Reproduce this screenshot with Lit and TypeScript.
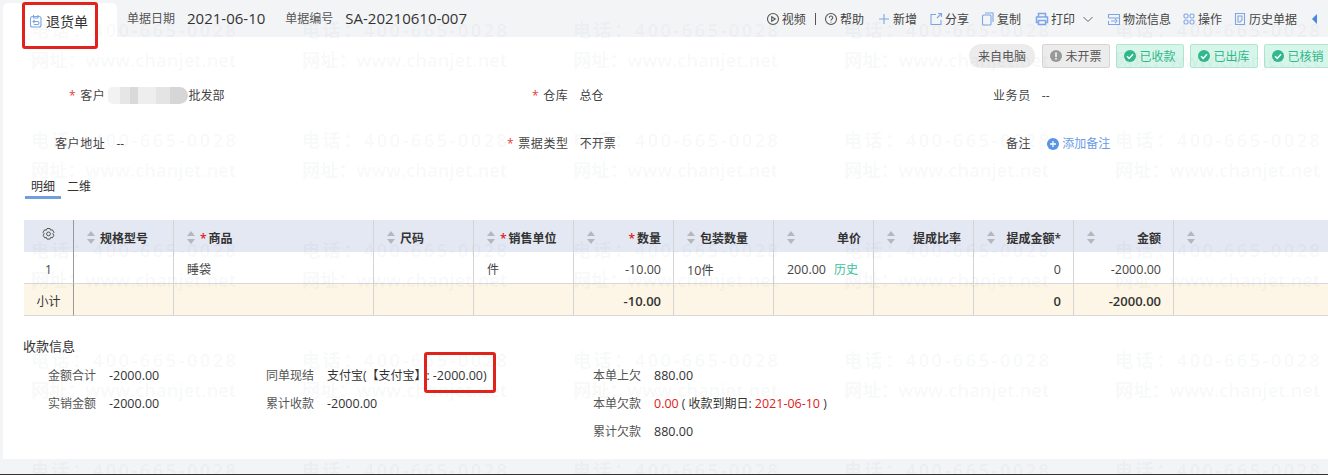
import { LitElement, html, css, svg } from "lit";
import { customElement } from "lit/decorators.js";

const sortIcon = html`<svg class="sort" width="8" height="14" viewBox="0 0 8 14"><path d="M4 0L8 5H0Z M0 8H8L4 13Z" fill="#b5b7bb"/></svg>`;
const ic = (p: unknown, color = "#7ea6e6") => html`<svg class="ic" width="14" height="14" viewBox="0 0 14 14" fill="none" stroke="${color}" stroke-width="1.1">${p}</svg>`;

const cols: { t: string; req?: boolean; right?: boolean }[] = [
  { t: "规格型号" }, { t: "商品", req: true }, { t: "尺码" }, { t: "销售单位", req: true },
  { t: "数量", req: true, right: true }, { t: "包装数量" }, { t: "单价", right: true },
  { t: "提成比率", right: true }, { t: "提成金额*", right: true }, { t: "金额", right: true }, { t: "" },
];

@customElement("app-root")
export class AppRoot extends LitElement {
  static styles = css`
    :host { display: block; width: 1328px; height: 475px; overflow: hidden; position: relative;
      font-family: "Open Sans", "Noto Sans CJK SC", sans-serif; font-size: 12px; color: #333; background: #f3f4f6; text-spacing-trim: space-all; }
    .page { height: 475px; display: flex; flex-direction: column; box-sizing: border-box; border-bottom: 1px solid #333; }
    .top { height: 37px; display: flex; flex: none; padding-left: 3px; }
    .tab { width: 114px; margin-top: 3px; background: #fff; border-radius: 5px 5px 0 0; display: flex; align-items: center;
      gap: 3px; padding: 2px 0 0 26px; box-sizing: border-box; font-size: 14px; color: #333; flex: none; }
    .doc { display: flex; align-items: center; padding: 0 0 0 10px; height: 37px; box-sizing: border-box; padding-bottom: 1px; color: #555; }
    .doc b { font-weight: 400; font-size: 15px; color: #333; margin: 0 20px 0 12px; }
    .tools { margin-left: auto; display: flex; align-items: center; height: 37px; padding: 0 9px 0 0; box-sizing: border-box; white-space: nowrap; color: #444; }
    .tool { display: flex; align-items: center; gap: 2px; margin-left: 12px; }
    .tool.tight { margin-left: 0; }
    .tool.m11 { margin-left: 11px; }
    .tool.m13 { margin-left: 13px; }
    .tool.m14 { margin-left: 14px; }
    .sep { width: 1px; height: 12px; background: #555; margin: 0 8px 0 9px; }
    .chev { margin-left: 4px; }
    .ic { flex: none; display: block; }
    .panel { flex: 1; margin-left: 3px; background: #fff; margin-bottom: 15px; min-height: 0; }
    .badges { display: flex; justify-content: flex-end; align-items: center; gap: 6px; height: 24px; margin-top: 7px; margin-right: -4px; }
    .badge { height: 24px; box-sizing: border-box; border: 1px solid #d5d5d5; background: #ececec; border-radius: 2px;
      display: flex; align-items: center; justify-content: center; gap: 3px; color: #555; width: 68px; }
    .badge.from { border: none; border-radius: 12px; width: 66px; margin-right: 1px; }
    .badge.ok { background: #d8f5ea; border-color: #aee8d3; color: #2fb98c; }
    .form { display: grid; grid-template-columns: 463px 461px 1fr; margin-top: 19px; height: 81px; grid-auto-rows: 48px; }
    .field { display: flex; align-items: flex-start; line-height: 17px; white-space: nowrap; }
    .field .lab { flex: none; color: #444; letter-spacing: .6px; }
    .field .val { margin-left: 11px; color: #444; }
    .field .val.near { margin-left: 3px; }
    .p40 { padding-left: 41px; }
    .p52 { padding-left: 52px; }
    .p66 { padding-left: 66px; }
    .p79 { padding-left: 79px; }
    .req { color: #e8403c; margin-right: 4px; }
    .blur { display: inline-block; width: 80px; height: 17px; vertical-align: top; border-radius: 8px 14px 14px 8px;
      background: linear-gradient(90deg,#f2f2f2 0 15%,#e6e6e6 15% 28%,#d9d9d9 28% 38%,#eee 38% 60%,#e4e4e4 60% 78%,#d6d6d6 78%); }
    .add { color: #6a9be8; display: inline-flex; align-items: center; gap: 3px; margin-left: 16px; }
    .tabs { display: flex; gap: 6px; margin-left: 22px; height: 27px; margin-top: 4px; }
    .tabs div { padding-top: 6px; height: 18px; line-height: 17px; color: #333; width: 24px; }
    .tabs .on { border-bottom: 3px solid #6f9fe0; padding-left: 6px; padding-right: 6px; }
    .grid { margin: 21px 0 0 21px; display: grid; grid-template-columns: 49px 100px 200px repeat(8, 100px) 1fr; grid-template-rows: 32px 32px 32px; }
    .cell { border-left: 1px solid #d5d5d5; box-sizing: border-box; display: flex; align-items: center; padding: 3px 12px 0 13px; min-width: 0; font-size: 12.5px; white-space: nowrap; }
    .cell.first { border-left: none; justify-content: center; padding: 3px 0 0; font-size: 12px; }
    .cell.r { justify-content: flex-end; }
    .h { background: #e4e8f3; font-weight: 600; color: #333; position: relative; font-size: 12px; padding-top: 4px; }
    .h .sort { position: absolute; left: 13px; top: 11px; }
    .h.pad { padding-left: 26px; }
    .h .star { color: #e01b1b; margin-right: 2px; }
    .h2 { border-left-color: #999; }
    .gear { margin-bottom: 7px; }
    .b { border-bottom: 1px solid #d8d8d8; color: #444; }
    .s { background: #fdf6e6; border-bottom: 1px solid #d8d8d8; font-weight: 600; color: #333; font-size: 13px; }
    .cell.first.s { font-weight: 400; }
    .cn { font-size: 12px; }
    .cell.price { padding-right: 15px; padding-left: 0; }
    .hist { color: #3cc0a0; margin-left: 8px; font-size: 12px; flex: none; }
    .pay { margin: 21px 0 0 20px; }
    .pay h4 { margin: 0; font-weight: 400; font-size: 13px; color: #333; line-height: 18px; }
    .pg { display: grid; grid-template-columns: 218px 327px 1fr; margin: 12px 0 0 25px; grid-auto-rows: 28px; line-height: 17px; }
    .pg .l { color: #555; margin-right: 13px; }
    .pg .v { font-size: 12.5px; }
    .pg .red { color: #e02020; font-size: 12.5px; }
    .mark { position: absolute; inset: 0; pointer-events: none; display: grid; grid-template-columns: repeat(5, 271px); grid-auto-rows: 110px; margin: 15px 0 0 31px; }
    .mark div { color: rgba(60,70,90,.055); font-size: 18px; line-height: 30px; letter-spacing: 2.6px; white-space: nowrap; font-weight: 600; }
    .mark div span { display: block; letter-spacing: .2px; }
    .anno { position: absolute; border: 3px solid #e0231c; border-radius: 3px; box-sizing: border-box; pointer-events: none; }
    .a1 { left: 22px; top: 2px; width: 76px; height: 47px; }
    .a2 { left: 424px; top: 352px; width: 72px; height: 41px; }
  `;

  render() {
    const S = svg;
    return html`<div class="page">
      <div class="top">
        <div class="tab">
          ${ic(S`<rect x="1.5" y="2.5" width="10.5" height="10.5" rx="2"/><path d="M4.5 1v3h4.500V1M4 7.500h4.500a1.500 1.500 0 0 1 0 3H5M5.500 6L4 7.500 5.500 9"/>`)}
          退货单
        </div>
        <div class="doc"><span>单据日期</span><b>2021-06-10</b><span>单据编号</span><b>SA-20210610-007</b></div>
        <div class="tools">
          <span class="tool">${ic(S`<circle cx="7" cy="7" r="5.500"/><path d="M5.700 4.700L9.300 7 5.700 9.300Z"/>`, "#555")}视频</span>
          <span class="sep"></span>
          <span class="tool tight">${ic(S`<circle cx="7" cy="7" r="5.500"/><path d="M5.300 5.700a1.700 1.700 0 1 1 2.500 1.500c-.6.300-.8.700-.8 1.300M7 9.800v.8"/>`, "#555")}帮助</span>
          <span class="tool m13">${ic(S`<path d="M7 2v10M2 7h10"/>`)}新增</span>
          <span class="tool">${ic(S`<path d="M7 2.500H2v10h10V8M8 6l4.500-4.500M9 1.500h3.500V5"/>`)}分享</span>
          <span class="tool">${ic(S`<rect x="1.500" y="3" width="8.500" height="10" rx="1"/><path d="M4 1h8v9"/>`)}复制</span>
          <span class="tool m14">${ic(S`<path d="M3.500 5V1.500h7V5M3.500 10.500H1.500V5h11v5.500h-2M3.500 8.500h7v4h-7z" stroke-width="1.500"/>`)}打印
            <svg class="chev" width="14" height="14" viewBox="0 0 14 14" fill="none" stroke="#666"><path d="M2.500 5L7 9.500 11.500 5"/></svg></span>
          <span class="tool">${ic(S`<path d="M1.500 6V2.500h11V12.500H1.500V9M1.500 6h11M4 9h4M8 7l2 2-2 2"/>`)}物流信息</span>
          <span class="tool m11">${ic(S`<rect x="2" y="2" width="4" height="4" rx="1.500"/><rect x="8" y="2" width="4" height="4" rx="1.500"/><rect x="2" y="8" width="4" height="4" rx="1.500"/><rect x="8" y="8" width="4" height="4" rx="1.500"/>`)}操作</span>
          <span class="tool m11">${ic(S`<path d="M2.500 1.500h9v11h-9zM5 4h4v4l-2 2H5z"/>`)}历史单据</span>
          <span class="tool m14"><svg width="8" height="12" viewBox="0 0 8 12"><path d="M6 1v10L1 6Z" fill="#4a86dd"/></svg></span>
        </div>
      </div>
      <div class="panel">
        <div class="badges">
          <div class="badge from">来自电脑</div>
          <div class="badge"><svg width="12" height="12" viewBox="0 0 12 12"><circle cx="6" cy="6" r="6" fill="#999"/><path d="M6 2.500v4.500M6 8v1.500" stroke="#fff" stroke-width="1.500"/></svg>未开票</div>
          ${["已收款", "已出库", "已核销"].map(t => html`<div class="badge ok"><svg width="12" height="12" viewBox="0 0 12 12"><circle cx="6" cy="6" r="6" fill="#2fb98c"/><path d="M3 6.200L5.200 8.400 9 4.200" fill="none" stroke="#fff" stroke-width="1.500"/></svg>${t}</div>`)}
        </div>
        <div class="form">
          <div class="field p66"><span class="lab"><span class="req">*</span>客户</span><span class="val near"><span class="blur"></span>批发部</span></div>
          <div class="field p66"><span class="lab"><span class="req">*</span>仓库</span><span class="val">总仓</span></div>
          <div class="field p66"><span class="lab">业务员</span><span class="val">--</span></div>
          <div class="field p52"><span class="lab">客户地址</span><span class="val">--</span></div>
          <div class="field p40"><span class="lab"><span class="req">*</span>票据类型</span><span class="val">不开票</span></div>
          <div class="field p79"><span class="lab">备注</span><span class="add"><svg width="12" height="12" viewBox="0 0 12 12"><circle cx="6" cy="6" r="6" fill="#5b93e6"/><path d="M6 3v6M3 6h6" stroke="#fff" stroke-width="1.300"/></svg>添加备注</span></div>
        </div>
        <div class="tabs"><div class="on">明细</div><div>二维</div></div>
        <div class="grid">
          <div class="cell first h"><svg class="gear" width="15" height="15" viewBox="0 0 15 15" fill="none" stroke="#555"><path d="M6 1.500h3l.6 1.700 1.800-.4 1.500 2.600-1.200 1.400 1.200 1.400-1.500 2.600-1.800-.4-.6 1.700H6l-.6-1.700-1.800.4-1.500-2.600L3.300 6.800 2.100 5.400l1.500-2.600 1.800.4z" stroke-linejoin="round"/><circle cx="7.500" cy="6.900" r="1.900"/></svg></div>
          ${cols.map((c, i) => html`<div class="cell h pad ${c.right ? "r" : ""} ${i === 0 ? "h2" : ""}">${sortIcon}${c.req ? html`<span class="star">*</span>` : ""}${c.t}</div>`)}
          <div class="cell first b">1</div>
          <div class="cell b h2"></div><div class="cell b cn">睡袋</div><div class="cell b"></div><div class="cell b cn">件</div>
          <div class="cell b r">-10.00</div><div class="cell b">10件</div>
          <div class="cell b r price">200.00<span class="hist">历史</span></div>
          <div class="cell b"></div><div class="cell b r">0</div><div class="cell b r">-2000.00</div><div class="cell b"></div>
          <div class="cell first s">小计</div>
          <div class="cell s h2"></div><div class="cell s"></div><div class="cell s"></div><div class="cell s"></div>
          <div class="cell s r">-10.00</div><div class="cell s"></div><div class="cell s"></div><div class="cell s"></div>
          <div class="cell s r">0</div><div class="cell s r">-2000.00</div><div class="cell s"></div>
        </div>
        <div class="pay">
          <h4>收款信息</h4>
          <div class="pg">
            <div><span class="l">金额合计</span><span class="v">-2000.00</span></div>
            <div><span class="l">同单现结</span>支付宝(【支付宝】: <span class="v">-2000.00)</span></div>
            <div><span class="l">本单上欠</span><span class="v">880.00</span></div>
            <div><span class="l">实销金额</span><span class="v">-2000.00</span></div>
            <div><span class="l">累计收款</span><span class="v">-2000.00</span></div>
            <div><span class="l">本单欠款</span><span class="red">0.00</span> ( 收款到期日: <span class="red">2021-06-10</span> )</div>
            <div></div><div></div>
            <div><span class="l">累计欠款</span><span class="v">880.00</span></div>
          </div>
        </div>
      </div>
    </div>
    <div class="mark">${Array.from({ length: 25 }, (_, i) => html`<div>电话：400-665-0028${i < 20 ? html`<span>网址：www.chanjet.net</span>` : ""}</div>`)}</div>
    <div class="anno a1"></div><div class="anno a2"></div>`;
  }
}
